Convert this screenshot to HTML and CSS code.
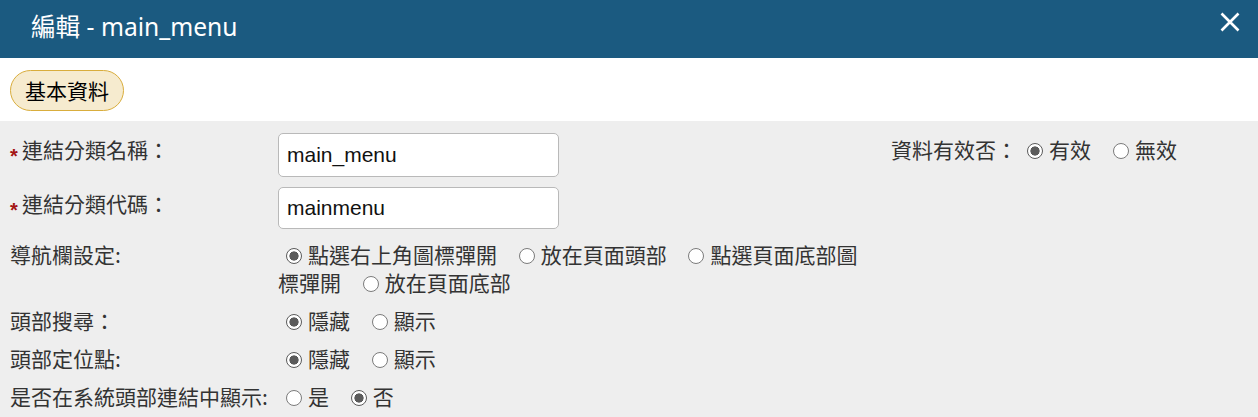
FILE: index.html
```html
<!DOCTYPE html>
<html lang="zh-Hant">
<head>
<meta charset="utf-8">
<title>編輯 - main_menu</title>
<link rel="stylesheet" href="styles.css">
</head>
<body>
<div class="dialog">
  <header class="titlebar">
    <h1 class="title">編輯 - main_menu</h1>
    <button class="close" type="button" aria-label="關閉">
      <svg width="20" height="20" viewBox="0 0 20 20"><path d="M1.5 1.5 L18.5 18.5 M18.5 1.5 L1.5 18.5" stroke="#fff" stroke-width="2.6" stroke-linecap="butt" fill="none"/></svg>
    </button>
  </header>
  <nav class="tabs"><span class="tab">基本資料</span></nav>
  <main class="form">
    <div class="row row-input">
      <div class="label"><span class="req">*</span>連結分類名稱：</div>
      <div class="value"><input class="text" type="text" value="main_menu"></div>
      <div class="label2">資料有效否：</div>
      <div class="options">
        <label class="opt"><input type="radio" name="valid" checked>有效</label>
        <label class="opt"><input type="radio" name="valid">無效</label>
      </div>
    </div>
    <div class="row row-input">
      <div class="label"><span class="req">*</span>連結分類代碼：</div>
      <div class="value"><input class="text short" type="text" value="mainmenu"></div>
    </div>
    <div class="row row-nav">
      <div class="label">導航欄設定:</div>
      <div class="value">
        <label class="opt"><input type="radio" name="nav" checked>點選右上角圖標彈開</label>
        <label class="opt"><input type="radio" name="nav">放在頁面頭部</label>
        <label class="opt"><input type="radio" name="nav">點選頁面底部圖標彈開</label>
        <label class="opt"><input type="radio" name="nav">放在頁面底部</label>
      </div>
    </div>
    <div class="row">
      <div class="label">頭部搜尋：</div>
      <div class="value">
        <label class="opt"><input type="radio" name="search" checked>隱藏</label>
        <label class="opt"><input type="radio" name="search">顯示</label>
      </div>
    </div>
    <div class="row">
      <div class="label">頭部定位點:</div>
      <div class="value">
        <label class="opt"><input type="radio" name="anchor" checked>隱藏</label>
        <label class="opt"><input type="radio" name="anchor">顯示</label>
      </div>
    </div>
    <div class="row">
      <div class="label">是否在系統頭部連結中顯示:</div>
      <div class="value">
        <label class="opt"><input type="radio" name="show">是</label>
        <label class="opt"><input type="radio" name="show" checked>否</label>
      </div>
    </div>
  </main>
</div>
</body>
</html>
```
FILE: styles.css
```css
html, body {
  margin: 0;
  padding: 0;
  height: 100%;
}
body {
  font-family: "Noto Sans CJK TC", "Noto Sans", sans-serif;
  background: #eeeeee;
  color: #333;
}
.dialog {
  display: flex;
  flex-direction: column;
  min-height: 100%;
}
.titlebar {
  height: 58px;
  background: #1b5a80;
  display: flex;
  align-items: center;
  justify-content: space-between;
  padding: 0 18px 0 31px;
}
.title {
  margin: -4px 0 0 0;
  font-family: "Noto Sans", "Noto Sans CJK TC", sans-serif;
  font-weight: 400;
  font-size: 24.6px;
  line-height: 30px;
  color: #fff;
}
.close {
  background: none;
  border: 0;
  padding: 0;
  width: 20px;
  height: 20px;
  display: flex;
  margin-top: -14px;
}
.tabs {
  background: #fff;
  height: 63px;
  padding: 12px 10px 0;
  box-sizing: border-box;
}
.tab {
  display: inline-block;
  box-sizing: border-box;
  height: 41px;
  line-height: 39px;
  padding: 0 14px;
  border: 1px solid #d9ad3c;
  border-radius: 21px;
  background: #f6ebcf;
  font-size: 21px;
  color: #000;
}
.form {
  flex: 1;
  background: #eeeeee;
  padding: 8px 0 0 0;
  font-size: 21px;
  line-height: 30px;
}
.row {
  display: flex;
  align-items: flex-start;
  padding: 4px 0;
}
.row-input {
  padding: 4px 0 6px;
}
.row-nav {
  padding-bottom: 5px;
}
.row-nav .value {
  line-height: 28px;
  padding-top: 1px;
}
.label {
  width: 278px;
  flex: none;
  box-sizing: border-box;
  padding-left: 10px;
  white-space: nowrap;
}
.row-input .label {
  padding-top: 1px;
}
.req {
  display: inline-block;
  width: 12px;
  color: #a31515;
  font-family: "Liberation Sans", sans-serif;
  font-weight: bold;
  font-size: 20px;
  vertical-align: -5px;
}
.value {
  width: 588px;
  flex: none;
}
.text {
  display: block;
  box-sizing: border-box;
  width: 281px;
  height: 44px;
  margin: 0;
  border: 1px solid #b9b9b9;
  border-radius: 5px;
  background: #fff;
  padding: 0 8px;
  font-family: "Liberation Sans", Arial, sans-serif;
  font-size: 21px;
  color: #111;
}
.text.short {
  height: 42px;
}
.label2 {
  margin-left: 25px;
  width: 128px;
  flex: none;
  padding-top: 1px;
  white-space: nowrap;
}
.options {
  display: flex;
  padding-top: 1px;
}
.options .opt {
  margin-right: 14px;
}
.opt {
  margin-right: 9px;
}
.opt input[type="radio"] {
  -webkit-appearance: none;
  appearance: none;
  box-sizing: border-box;
  width: 16px;
  height: 16px;
  margin: 0 6px 0 8px;
  border: 1px solid #7b7b7b;
  border-radius: 50%;
  background: #fff;
  vertical-align: -1px;
}
.opt input[type="radio"]:checked {
  border: 1.5px solid #5b5b5b;
  background: radial-gradient(circle, #5b5b5b 0 4.3px, #fff 4.9px);
}
```
